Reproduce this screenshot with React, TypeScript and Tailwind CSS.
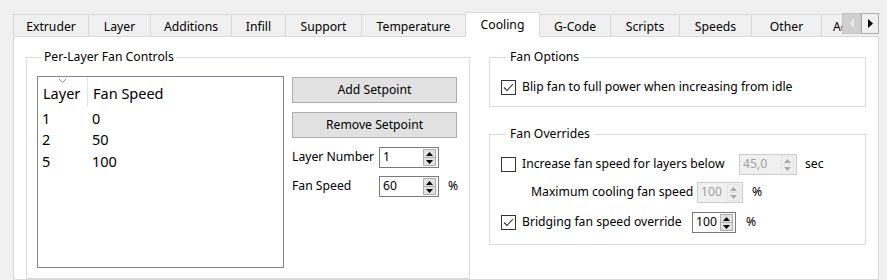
import React from 'react';

const tabs = [
  { label: 'Extruder', w: 'w-[76px]' },
  { label: 'Layer', w: 'w-[63px]' },
  { label: 'Additions', w: 'w-[82px]' },
  { label: 'Infill', w: 'w-[55px]' },
  { label: 'Support', w: 'w-[77px]' },
  { label: 'Temperature', w: 'w-[105px]' },
  { label: 'Cooling', w: 'w-[75px]', active: true },
  { label: 'G-Code', w: 'w-[72px]' },
  { label: 'Scripts', w: 'w-[70px]' },
  { label: 'Speeds', w: 'w-[73px]' },
  { label: 'Other', w: 'w-[71px]' },
  { label: 'Advanced', w: 'w-[80px]' },
];

const setpoints = [
  { layer: 1, speed: 0 },
  { layer: 2, speed: 50 },
  { layer: 5, speed: 100 },
];

function Arrows({ disabled }: { disabled?: boolean }) {
  const fill = disabled ? '#a8a8a8' : '#000';
  return (
    <div
      className={
        'flex flex-col w-[13px] h-[17px] mr-[2px] shrink-0 ' +
        (disabled ? 'border border-[#e3e3e3]' : 'border border-[#adadad] bg-[#e1e1e1]')
      }
    >
      <div
        className={
          'flex-1 flex items-center justify-center border-b ' +
          (disabled ? 'border-[#e3e3e3]' : 'border-[#adadad]')
        }
      >
        <svg width="7" height="4" viewBox="0 0 7 4">
          <path d="M0 4 L3.5 0 L7 4 Z" fill={fill} />
        </svg>
      </div>
      <div className="flex-1 flex items-center justify-center">
        <svg width="7" height="4" viewBox="0 0 7 4">
          <path d="M0 0 L3.5 4 L7 0 Z" fill={fill} />
        </svg>
      </div>
    </div>
  );
}

function Spin({ value, w, disabled }: { value: string; w: string; disabled?: boolean }) {
  return (
    <div
      className={
        'flex items-center h-[21px] border shrink-0 ' +
        w +
        (disabled
          ? ' border-[#cccccc] bg-[#f0f0f0] text-[#a0a0a0]'
          : ' border-[#7a7a7a] bg-white text-black')
      }
    >
      <span className="flex-1 pl-[3px] leading-none whitespace-nowrap">{value}</span>
      <Arrows disabled={disabled} />
    </div>
  );
}

function Check({ checked }: { checked?: boolean }) {
  return (
    <div className="w-[15px] h-[15px] border border-[#333333] bg-white flex items-center justify-center shrink-0">
      {checked && (
        <svg width="11" height="9" viewBox="0 0 11 9">
          <path d="M1 4.5 L4 7.5 L10 1" fill="none" stroke="#333" strokeWidth="1.1" />
        </svg>
      )}
    </div>
  );
}

function Button({ children }: { children: React.ReactNode }) {
  return (
    <button className="w-[165px] h-[26px] border border-[#adadad] bg-[#e1e1e1] flex items-center justify-center">
      {children}
    </button>
  );
}

export default function App() {
  return (
    <div
      className="w-[887px] h-[280px] bg-[#f0f0f0] overflow-hidden pl-[13px] pt-[12px] text-[12.2px] text-black flex flex-col whitespace-nowrap"
      style={{ fontFamily: '"Noto Sans", sans-serif' }}
    >
      {/* tab strip */}
      <div className="relative flex items-end w-[866px] h-[25px] -mb-px pl-px z-10 overflow-hidden">
        {tabs.map((t) =>
          t.active ? (
            <div
              key={t.label}
              className={
                t.w +
                ' h-[25px] -ml-px pt-[1px] bg-white border border-b-0 border-[#d9d9d9] flex items-center justify-center shrink-0'
              }
            >
              {t.label}
            </div>
          ) : (
            <div
              key={t.label}
              className={
                t.w +
                ' h-[22px] mb-px -ml-px pt-[3px] border border-b-0 border-[#d9d9d9] flex items-center justify-center shrink-0'
              }
            >
              {t.label}
            </div>
          )
        )}
        <div className="absolute left-[829px] top-[1px] flex">
          <div className="w-[19px] h-[21px] bg-[#cfcfcf] border border-[#c4c4c4] flex items-center justify-center">
            <svg width="5" height="9" viewBox="0 0 5 9">
              <path d="M5 0 L0 4.5 L5 9 Z" fill="#e8e8e8" />
            </svg>
          </div>
          <div className="w-[18px] h-[21px] bg-[#f0f0f0] border border-[#adadad] flex items-center justify-center">
            <svg width="5" height="9" viewBox="0 0 5 9">
              <path d="M0 0 L5 4.5 L0 9 Z" fill="#000" />
            </svg>
          </div>
        </div>
      </div>

      {/* panel */}
      <div className="w-[866px] flex-1 bg-white border border-[#d9d9d9] flex gap-[19px] pl-[12px] pt-[12px]">
        <fieldset className="w-[444px] h-[230px] border border-[#dcdcdc] px-[10px] pt-[11px] flex gap-[8px] shrink-0">
          <legend className="ml-[5px] px-[2px] leading-[16px]">Per-Layer Fan Controls</legend>

          <div className="w-[247px] h-[192px] border border-[#828790] bg-white text-[14.5px]">
            <div className="flex h-[30px] items-end">
              <div className="w-[50px] pl-[5px] pb-[2px] border-r border-[#e5e5e5] h-full flex items-end relative">
                <svg className="absolute left-[21px] top-[2px]" width="7" height="4" viewBox="0 0 7 4">
                  <path d="M0 0 L3.5 3.5 L7 0" fill="none" stroke="#909090" strokeWidth="1" />
                </svg>
                Layer
              </div>
              <div className="pl-[5px] pb-[2px]">Fan Speed</div>
            </div>
            <div className="pt-[1px]">
              {setpoints.map((s) => (
                <div key={s.layer} className="flex h-[21.5px] items-center">
                  <div className="w-[50px] pl-[4px]">{s.layer}</div>
                  <div className="pl-[4px]">{s.speed}</div>
                </div>
              ))}
            </div>
          </div>

          <div className="flex flex-col pt-[1px]">
            <Button>Add Setpoint</Button>
            <div className="h-[9px]" />
            <Button>Remove Setpoint</Button>
            <div className="flex items-center mt-[9px]">
              <span className="w-[87px]">Layer Number</span>
              <Spin value="1" w="w-[60px]" />
            </div>
            <div className="flex items-center mt-[8px]">
              <span className="w-[87px]">Fan Speed</span>
              <Spin value="60" w="w-[60px]" />
              <span className="ml-[9px]">%</span>
            </div>
          </div>
        </fieldset>

        <div className="flex flex-col gap-[19px]">
          <fieldset className="w-[377px] h-[58px] border border-[#dcdcdc] pl-[11px] pt-[13px]">
            <legend className="ml-[5px] px-[4px] leading-[16px]">Fan Options</legend>
            <div className="flex items-center gap-[6px]">
              <Check checked />
              <span>Blip fan to full power when increasing from idle</span>
            </div>
          </fieldset>

          <fieldset className="w-[377px] h-[119px] border border-[#dcdcdc] pl-[11px] pt-[12px]">
            <legend className="ml-[5px] px-[4px] leading-[16px]">Fan Overrides</legend>
            <div className="flex items-center">
              <Check />
              <span className="ml-[6px] w-[217px]">Increase fan speed for layers below</span>
              <Spin value="45,0" w="w-[58px]" disabled />
              <span className="ml-[8px]">sec</span>
            </div>
            <div className="flex items-center mt-[7px] pl-[30px]">
              <span className="w-[166px]">Maximum cooling fan speed</span>
              <Spin value="100" w="w-[46px]" disabled />
              <span className="ml-[9px]">%</span>
            </div>
            <div className="flex items-center mt-[9px]">
              <Check checked />
              <span className="ml-[6px] w-[170px]">Bridging fan speed override</span>
              <Spin value="100" w="w-[44px]" />
              <span className="ml-[10px]">%</span>
            </div>
          </fieldset>
        </div>
      </div>
    </div>
  );
}
